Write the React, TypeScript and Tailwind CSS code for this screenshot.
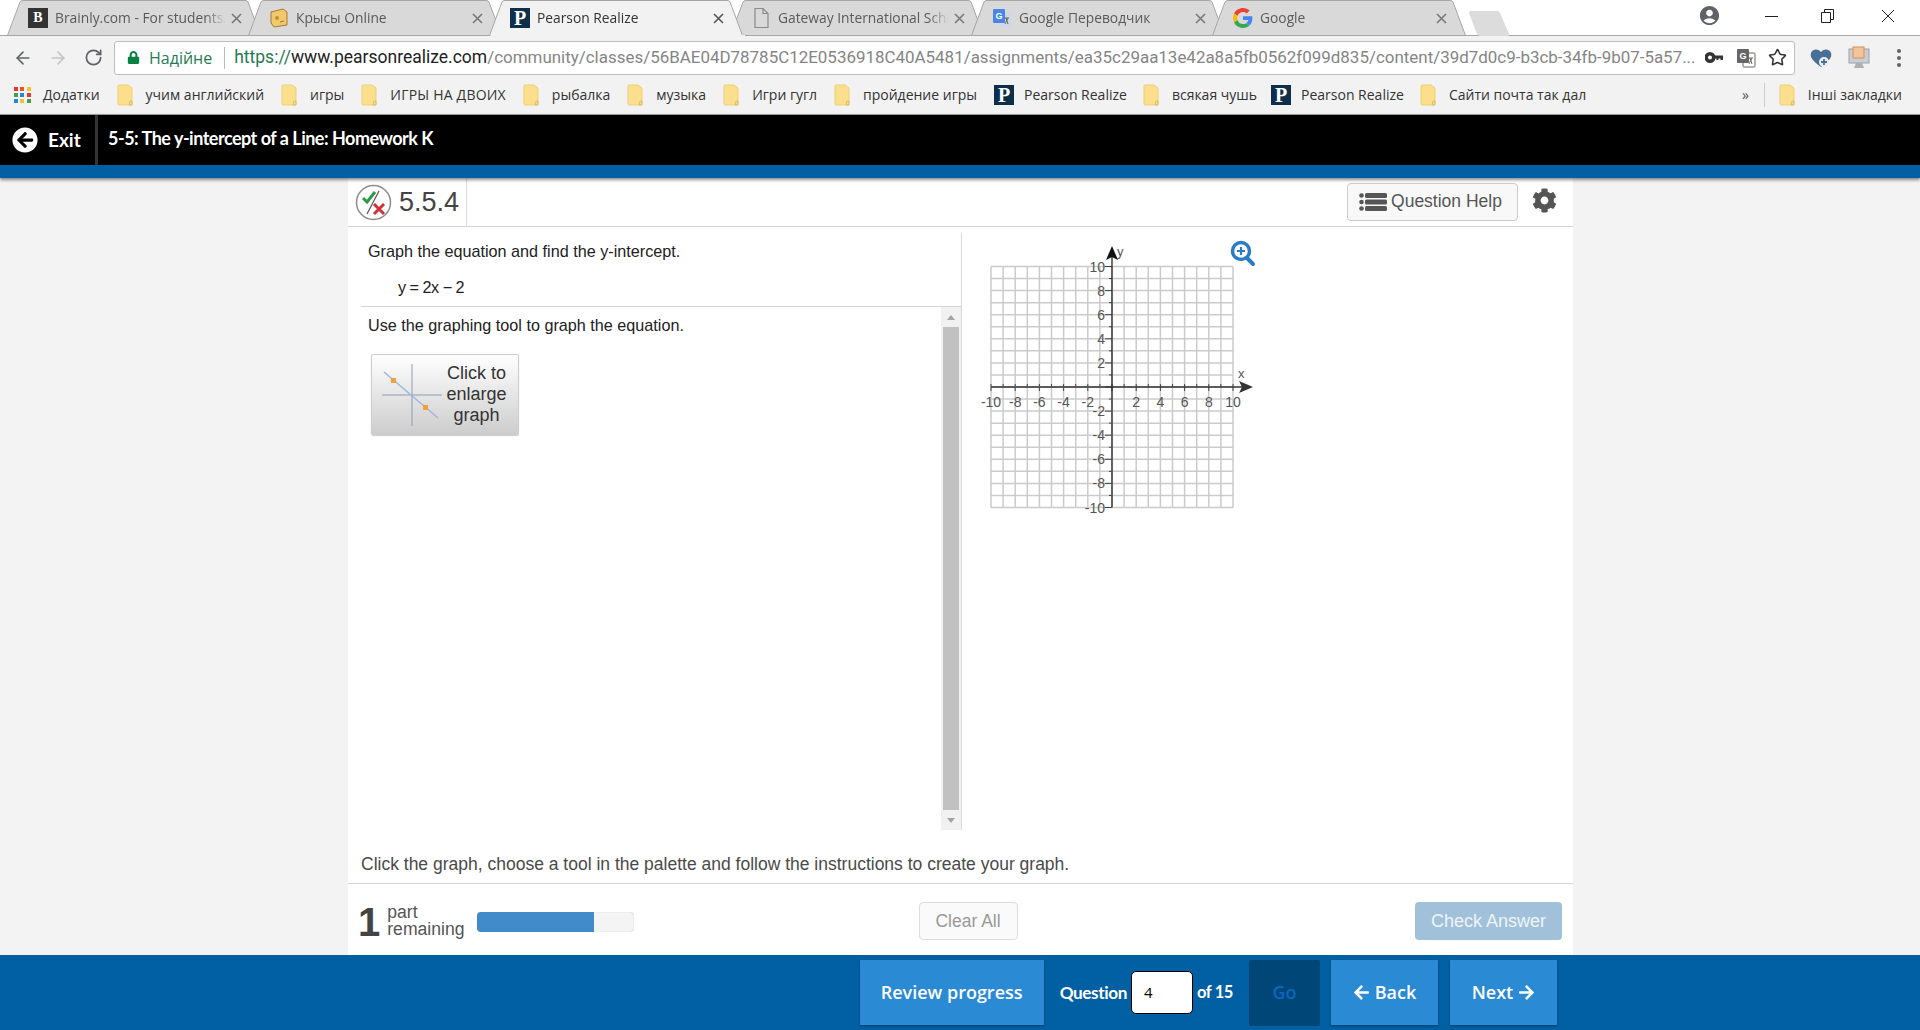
import React from 'react';
import { ArrowLeft, ArrowRight, RotateCw, Star } from 'lucide-react';
import { FaArrowCircleLeft, FaArrowLeft, FaArrowRight, FaCog, FaLock } from 'react-icons/fa';
import { MdAccountCircle } from 'react-icons/md';

const PearsonIcon = () => (
  <div className="w-5 h-5 bg-[#0e2f4c] text-white flex items-center justify-center font-['Liberation_Serif',serif] font-bold text-[20px] leading-none shrink-0">
    P
  </div>
);

const BrainlyIcon = () => (
  <div className="w-5 h-5 bg-[#333] text-white flex items-center justify-center font-['Liberation_Serif',serif] font-bold text-[14px] leading-none shrink-0">
    B
  </div>
);

const CheeseIcon = () => (
  <svg width="20" height="20" viewBox="0 0 20 20" className="shrink-0">
    <path d="M2 4 L14 1 L18 4 L18 17 L5 19 L2 15 Z" fill="#f0c96a" stroke="#a8782c" />
    <circle cx="8" cy="10" r="2" fill="#c68f35" />
    <path d="M11 14 L15 13" stroke="#a8782c" />
  </svg>
);

const DocIcon = () => (
  <svg width="20" height="22" viewBox="0 0 20 22" className="shrink-0">
    <path d="M4 1.500 H12 L17 6.500 V20.500 H4 Z M12 1.500 V6.500 H17" fill="none" stroke="#8a8a8a" strokeWidth="1.200" />
  </svg>
);

const TranslateIcon = ({ grey }: { grey?: boolean }) => (
  <svg width="20" height="20" viewBox="0 0 20 20" className="shrink-0">
    <rect x="7" y="5" width="12" height="14" rx="1" fill={grey ? '#fff' : '#cfd8e6'} stroke={grey ? '#666' : 'none'} />
    <rect x="1" y="1" width="12" height="14" rx="1" fill={grey ? '#666' : '#4a86e8'} />
    <text x="7" y="11" fontSize="9" fontWeight="700" fill="#fff" textAnchor="middle" fontFamily="Liberation Sans">G</text>
    <path d="M12 10 H17 M14 10 L16 16 M16 10 L13 16" stroke="#666" strokeWidth="1" fill="none" />
  </svg>
);

const GoogleIcon = () => (
  <svg width="20" height="20" viewBox="0 0 48 48" className="shrink-0">
    <path fill="#EA4335" d="M24 9.500c3.500 0 6.700 1.300 9.100 3.500l6.800-6.800C35.800 2.400 30.300 0 24 0 14.600 0 6.500 5.400 2.600 13.200l7.900 6.100C12.400 13.700 17.700 9.500 24 9.500z" />
    <path fill="#4285F4" d="M46.500 24.500c0-1.600-.1-3.100-.4-4.500H24v9h12.700c-.6 3-2.200 5.400-4.700 7.100l7.600 5.900c4.400-4.100 6.900-10.100 6.900-17.500z" />
    <path fill="#FBBC05" d="M10.500 28.700c-.5-1.500-.8-3-.8-4.700s.3-3.200.8-4.700l-7.900-6.100C.9 16.500 0 20.100 0 24s.9 7.500 2.600 10.800l7.900-6.100z" />
    <path fill="#34A853" d="M24 48c6.500 0 11.900-2.100 15.600-5.800L32 36.300c-2.100 1.400-4.800 2.200-8 2.200-6.300 0-11.600-4.200-13.500-9.800l-7.900 6.100C6.500 42.600 14.600 48 24 48z" />
  </svg>
);

const FolderIcon = () => (
  <svg width="16" height="22" viewBox="0 0 16 22" className="shrink-0">
    <path d="M2 1 H11 L15 4 V20 Q15 21 14 21 H2 Q1 21 1 20 V2 Q1 1 2 1 Z" fill="#fbdf8c" stroke="#efcf74" />
    <path d="M13 17 H15 V21 H12 Z" fill="none" stroke="#d8b660" strokeWidth="0.800" />
  </svg>
);

const AppsIcon = () => {
  const colors = ['#e53935', '#f4511e', '#fbc02d', '#43a047', '#1e88e5', '#e53935', '#1e88e5', '#fbc02d', '#43a047'];
  return (
    <div className="grid grid-cols-3 gap-[2px] w-[17px] shrink-0">
      {colors.map((c, i) => (
        <div key={i} className="w-[4px] h-[4px]" style={{ backgroundColor: c }} />
      ))}
    </div>
  );
};

const tabs = [
  { title: 'Brainly.com - For students. By students', icon: <BrainlyIcon /> },
  { title: 'Крысы Online', icon: <CheeseIcon /> },
  { title: 'Pearson Realize', icon: <PearsonIcon />, active: true },
  { title: 'Gateway International School', icon: <DocIcon /> },
  { title: 'Google Переводчик', icon: <TranslateIcon /> },
  { title: 'Google', icon: <GoogleIcon /> },
];

const Tab = ({ title, icon, active }: { title: string; icon: React.ReactNode; active?: boolean }) => {
  const w = 254;
  return (
    <div className={`relative w-[254px] h-[36px] -ml-[13px] first:ml-0 shrink-0 flex items-center pl-[21px] ${active ? 'z-10' : ''}`}>
      <svg width={w} height="36" className="absolute left-0 top-0">
        <path
          d={`M0.500 35.500 L13 2 Q13.500 .5 16 .5 H${w - 16} Q${w - 13.500} .5 ${w - 13} 2 L${w - 0.500} 35.500 ${active ? '' : 'Z'}`}
          fill={active ? '#f2f2f2' : '#d9d9d9'}
          stroke="#a6a6a6"
        />
      </svg>
      <div className="relative flex items-center gap-[7px] w-[198px]">
        <div className="w-5 flex justify-center shrink-0">{icon}</div>
        <div className={`whitespace-nowrap overflow-hidden flex-1 text-[13.800px] [mask-image:linear-gradient(to_right,black_88%,transparent)] ${active ? 'text-[#333]' : 'text-[#5a5a5a]'}`}>
          {title}
        </div>
      </div>
      <svg width="11" height="11" viewBox="0 0 11 11" className="relative ml-[5px]">
        <path d="M1 1 L10 10 M10 1 L1 10" stroke={active ? '#555' : '#777'} strokeWidth="1.600" />
      </svg>
    </div>
  );
};

const bookmarks = [
  { label: 'учим английский', gapClass: 'gap-[13px] mr-[17px]' },
  { label: 'игры', gapClass: 'gap-[13px] mr-[17px]' },
  { label: 'ИГРЫ НА ДВОИХ', gapClass: 'gap-[13px] mr-[17px] tracking-[0.200px]' },
  { label: 'рыбалка', gapClass: 'gap-[13px] mr-[17px]' },
  { label: 'музыка', gapClass: 'gap-[13px] mr-[17px]' },
  { label: 'Игри гугл', gapClass: 'gap-[13px] mr-[17px]' },
  { label: 'пройдение игры', gapClass: 'gap-[13px] mr-[17px]' },
  { label: 'Pearson Realize', pearson: true, gapClass: 'gap-[10px] mr-[16px]' },
  { label: 'всякая чушь', gapClass: 'gap-[13px] mr-[14px]' },
  { label: 'Pearson Realize', pearson: true, gapClass: 'gap-[10px] mr-[16px]' },
  { label: 'Сайти почта так дал', gapClass: 'gap-[13px] mr-[17px]' },
];

const BrowserChrome = () => (
  <div className="font-['Open_Sans',sans-serif]">
    {/* tab strip */}
    <div className="relative h-[36px] flex pl-[7px]">
      {tabs.map(t => (
        <Tab key={t.title} {...t} />
      ))}
      <div className="absolute left-0 right-0 bottom-0 h-px bg-[#a6a6a6]" />
      <div className="absolute left-[491px] w-[254px] bottom-0 h-px bg-[#f2f2f2] z-20" />
      <svg width="42" height="27" className="relative mt-[10px] ml-[2px]">
        <path d="M3 1 H29 Q31 1 32 3 L41 24 Q41.500 26 39 26 H12 Q10 26 9 24 L1 3 Q1 1 3 1 Z" fill="#dcdcdc" />
      </svg>
      <div className="ml-auto flex items-start pt-[7px] text-[#5f6368]">
        <MdAccountCircle size={23} className="mr-[44px] -mt-[3px]" />
        <svg width="14" height="14" className="mr-[42px] mt-[2px]">
          <path d="M0 7.500 H13" stroke="#222" />
        </svg>
        <svg width="14" height="14" className="mr-[46px] mt-[2px]">
          <path d="M3.500 3.500 V.5 H12.500 V10.500 H9.500 M.5 3.500 H9.500 V13.500 H.5 Z" fill="none" stroke="#222" />
        </svg>
        <svg width="14" height="14" className="mr-[25px] mt-[2px]">
          <path d="M1 1 L13 13 M13 1 L1 13" stroke="#222" />
        </svg>
      </div>
    </div>

    {/* toolbar */}
    <div className="h-[43px] bg-[#f2f2f2] flex items-center relative">
      <ArrowLeft size={20} className="ml-[13px] text-[#5f6368]" strokeWidth={2} />
      <ArrowRight size={20} className="ml-[15px] text-[#c4c4c4]" strokeWidth={2} />
      <RotateCw size={19} className="ml-[16px] text-[#5f6368]" strokeWidth={2.200} />
      <div className="ml-[11px] w-[1681px] h-[34px] bg-white border border-[#bdbdbd] rounded-[3px] flex items-center text-[17.500px] whitespace-nowrap overflow-hidden">
        <FaLock size={13} className="ml-[12px] text-[#0b8043] shrink-0" />
        <span className="ml-[9px] text-[#257a52] text-[16px]">Надійне</span>
        <div className="w-px h-[22px] bg-[#bbb] ml-[12px]" />
        <div className="ml-[9px] w-[1460px] overflow-hidden font-['Roboto',sans-serif]">
          <span className="text-[#257a52]">https://</span>
          <span className="text-[#222]">www.pearsonrealize.com</span>
          <span className="text-[#858585] text-[16.950px]">/community/classes/56BAE04D78785C12E0536918C40A5481/assignments/ea35c29aa13e42a8a5fb0562f099d835/content/39d7d0c9-b3cb-34fb-9b07-5a57...</span>
        </div>
        <svg width="18" height="11" viewBox="0 0 18 11" className="ml-[11px] shrink-0">
          <path fillRule="evenodd" d="M5 0 A5.500 5.500 0 1 1 5 11 A5.500 5.500 0 1 1 5 0 Z M5 3.500 A2 2 0 1 0 5 7.500 A2 2 0 1 0 5 3.500 Z" fill="#333" />
          <path d="M9 3.500 H18 V8 H15.500 V6.500 H13.500 V8 H11.500 V6.500 H9 Z" fill="#333" />
        </svg>
        <div className="ml-[13px] shrink-0">
          <TranslateIcon grey />
        </div>
        <Star size={19} className="ml-[12px] text-[#333] shrink-0" strokeWidth={2} />
      </div>
      <svg width="24" height="22" viewBox="0 0 24 22" className="ml-[14px]">
        <path d="M12 20 C2 13 1 9 2 6 C3 2 9 1 12 5 C15 1 21 2 22 6 C23 9 22 13 12 20 Z" fill="#4a6f96" />
        <circle cx="15" cy="15" r="5" fill="#e9eef4" />
        <path d="M15 12 V18 M12 15 H18" stroke="#4a6f96" strokeWidth="1.800" />
      </svg>
      <svg width="24" height="24" viewBox="0 0 24 24" className="ml-[14px]">
        <rect x="2" y="3" width="20" height="14" fill="#c8ced4" stroke="#9aa2a8" />
        <rect x="6" y="1" width="11" height="11" fill="#f3c39a" stroke="#d88e54" />
        <path d="M9 17 L7 22 H17 L15 17" fill="#aab2b8" />
      </svg>
      <svg width="6" height="20" className="ml-[25px]">
        <circle cx="3" cy="3" r="2" fill="#5f6368" />
        <circle cx="3" cy="10" r="2" fill="#5f6368" />
        <circle cx="3" cy="17" r="2" fill="#5f6368" />
      </svg>
    </div>

    {/* bookmarks */}
    <div className="h-[35px] bg-[#f2f2f2] flex items-center pb-[4px] text-[14px] text-[#333] whitespace-nowrap pl-[14px]">
      <AppsIcon />
      <span className="ml-[12px] mr-[17px]">Додатки</span>
      {bookmarks.map((b, i) => (
        <div key={i} className={`flex items-center ${b.gapClass}`}>
          {b.pearson ? <PearsonIcon /> : <FolderIcon />}
          <span>{b.label}</span>
        </div>
      ))}
      <span className="ml-auto text-[#555]">»</span>
      <div className="w-px h-6 bg-[#ccc] ml-[15px] mr-[14px]" />
      <div className="flex items-center gap-[13px] mr-[18px]">
        <FolderIcon />
        <span>Інші закладки</span>
      </div>
    </div>
  </div>
);

const AppHeader = () => (
  <div className="relative z-10 shadow-[0_2px_3px_rgba(0,0,0,0.45)]">
    <div className="h-[51px] bg-black text-white flex items-center border-t border-[#999]">
      <div className="w-[98px] h-full flex items-center border-r-[3px] border-[#333] pl-[12px]">
        <FaArrowCircleLeft size={26} />
        <span className="ml-[10px] font-['Lato',sans-serif] font-bold text-[19px]">Exit</span>
      </div>
      <div className="ml-[10px] -mt-[4px] font-['Lato',sans-serif] font-bold text-[18px] tracking-[-0.500px]">
        5-5: The y-intercept of a Line: Homework K
      </div>
    </div>
    <div className="h-[13px] bg-[#0060a3]" />
  </div>
);

const Graph = () => {
  const sx = (v: number) => 142 + v * 12.1;
  const sy = (v: number) => 147 - v * 12.05;
  const units = Array.from({ length: 21 }, (_, i) => i - 10);
  const labels = [-10, -8, -6, -4, -2, 2, 4, 6, 8, 10];
  return (
    <svg width="300" height="280" className="ml-[8px] mt-[13px] font-['Liberation_Sans',sans-serif]">
      {units.map(u => (
        <g key={u}>
          <line x1={sx(u)} x2={sx(u)} y1={sy(10)} y2={sy(-10)} stroke="#cbcbcb" strokeWidth="1.500" />
          <line x1={sx(-10)} x2={sx(10)} y1={sy(u)} y2={sy(u)} stroke="#cbcbcb" strokeWidth="1.500" />
          <line x1={sx(u)} x2={sx(u)} y1={sy(0) - 3} y2={sy(0) + (u % 2 === 0 ? 4 : 0)} stroke="#444" />
          <line x1={sx(0) - (u % 2 === 0 ? 7 : 3)} x2={sx(0)} y1={sy(u)} y2={sy(u)} stroke="#444" />
        </g>
      ))}
      <line x1={sx(-10)} x2={sx(11.300)} y1={sy(0)} y2={sy(0)} stroke="#333" strokeWidth="1.300" />
      <line x1={sx(0)} x2={sx(0)} y1={sy(11.300)} y2={sy(-10)} stroke="#222" strokeWidth="1.300" />
      <path d="M142 6 L148 20 L142 17 L136 20 Z" fill="#111" />
      <path d="M283 147 L269 141 L272 147 L269 153 Z" fill="#333" />
      <text x="147" y="16" fontSize="13" fill="#555">y</text>
      <text x="268" y="138" fontSize="13" fill="#555">x</text>
      {labels.map(l => (
        <g key={l} fontSize="14" fill="#555">
          <text x={sx(l)} y={167} textAnchor="middle">{l}</text>
          <text x={sx(0) - 7} y={sy(l) + 5} textAnchor="end">{l}</text>
        </g>
      ))}
      {/* magnifier */}
      <circle cx="271" cy="11" r="8.500" fill="none" stroke="#2a7cc7" strokeWidth="3.400" />
      <path d="M277 18 L283 24" stroke="#2a7cc7" strokeWidth="4" strokeLinecap="round" />
      <path d="M271 7 V15 M267 11 H275" stroke="#2a7cc7" strokeWidth="2.200" />
    </svg>
  );
};

const EnlargeButton = () => (
  <button className="ml-[10px] mt-[17px] w-[148px] h-[81px] flex items-center bg-gradient-to-b from-white to-[#cdcdcd] border border-[#ccc] rounded-[2px] text-[18px] leading-[21px] text-[#333] shadow-[0_1px_1px_rgba(0,0,0,0.2)]">
    <svg width="64" height="64" viewBox="0 0 64 64" className="ml-[8px] shrink-0">
      <path d="M32 1 V63 M2 32 H62" stroke="#8f9db3" strokeWidth="1" />
      <path d="M4 9 L58 55" stroke="#9db8dc" strokeWidth="1.500" />
      <rect x="11" y="15" width="5" height="5" fill="#f0a13c" />
      <rect x="43" y="42" width="5" height="5" fill="#f0a13c" />
    </svg>
    <span className="flex-1 text-center pr-[9px]">
      Click to
      <br />
      enlarge
      <br />
      graph
    </span>
  </button>
);

const Scrollbar = () => (
  <div className="w-[20px] shrink-0 flex flex-col items-center bg-[#f1f1f1]">
    <div className="h-[20px] flex items-center justify-center">
      <div className="w-0 h-0 border-x-[4px] border-x-transparent border-b-[5px] border-b-[#a3a3a3]" />
    </div>
    <div className="w-[16px] flex-1 bg-[#c1c1c1]" />
    <div className="h-[20px] flex items-center justify-center">
      <div className="w-0 h-0 border-x-[4px] border-x-transparent border-t-[5px] border-t-[#a3a3a3]" />
    </div>
  </div>
);

const QuestionHeader = () => (
  <div className="h-[49px] border-b border-[#d5d5d5] flex items-center">
    <div className="h-[48px] w-[119px] border-r border-[#ddd] flex items-center pl-[7px]">
      <svg width="37" height="37" viewBox="0 0 37 37" className="shrink-0">
        <circle cx="18.500" cy="18.500" r="17" fill="#fff" stroke="#8c8c8c" strokeWidth="1.500" />
        <path d="M8 14 L12 18 L20 8" fill="none" stroke="#2f9a46" strokeWidth="3" />
        <path d="M24 7 L12 30" stroke="#555" strokeWidth="1.200" />
        <path d="M19 20 L29 30 M29 20 L19 30" stroke="#d12f3a" strokeWidth="3" />
      </svg>
      <span className="ml-[7px] text-[27px] text-[#444]">5.5.4</span>
    </div>
    <button className="ml-auto w-[171px] h-[38px] -mt-[1px] pr-[4px] flex items-center justify-center gap-[4px] bg-[#f8f8f8] border border-[#ccc] rounded-[4px] text-[17.500px] text-[#555]">
      <svg width="28" height="18" viewBox="0 0 28 18">
        <circle cx="2.500" cy="2.500" r="2.300" fill="#555" />
        <circle cx="2.500" cy="9" r="2.300" fill="#555" />
        <circle cx="2.500" cy="15.500" r="2.300" fill="#555" />
        <rect x="6" y="0" width="22" height="5" rx="1.500" fill="#555" />
        <rect x="6" y="6.500" width="22" height="5" rx="1.500" fill="#555" />
        <rect x="6" y="13" width="22" height="5" rx="1.500" fill="#555" />
      </svg>
      Question Help
    </button>
    <FaCog size={25} className="ml-[14px] mr-[16px] -mt-[3px] text-[#555]" />
  </div>
);

const QuestionBody = () => (
  <div className="h-[603px] flex">
    <div className="w-[614px] flex flex-col border-r border-[#d8d8d8] mt-[6px]">
      <div className="h-[74px] ml-[13px] border-b border-[#d5d5d5] text-[#222] text-[16.200px]">
        <div className="ml-[7px] mt-[6px]">Graph the equation and find the y-intercept.</div>
        <div className="ml-[37px] mt-[12px] tracking-[-0.500px]">y = 2x − 2</div>
      </div>
      <div className="flex-1 flex ml-[13px]">
        <div className="flex-1">
          <div className="ml-[7px] mt-[6px] text-[16.200px] text-[#222]">Use the graphing tool to graph the equation.</div>
          <EnlargeButton />
        </div>
        <Scrollbar />
      </div>
    </div>
    <Graph />
  </div>
);

const QuestionFooter = () => (
  <>
    <div className="h-[54px] border-b border-[#d5d5d5] flex items-center pt-[16px] pl-[13px] text-[17.500px] text-[#4a4a4a]">
      Click the graph, choose a tool in the palette and follow the instructions to create your graph.
    </div>
    <div className="h-[70px] flex items-start pt-[18px] text-[#555]">
      <span className="ml-[10px] mt-[-4px] text-[40px] leading-[48px] font-bold text-[#444]">1</span>
      <div className="ml-[7px] mt-[2px] text-[17.600px] leading-[17px]">
        part
        <br />
        remaining
      </div>
      <div className="ml-[12px] mt-[10px] w-[157px] h-[20px] bg-[#f4f4f4] rounded-[4px] overflow-hidden shadow-[inset_0_0_1px_rgba(0,0,0,0.3)]">
        <div className="w-[117px] h-full bg-[#428bca]" />
      </div>
      <button className="ml-[285px] w-[99px] h-[38px] bg-[#fafafa] border border-[#ddd] rounded-[4px] text-[17.500px] text-[#999]">
        Clear All
      </button>
      <button className="ml-auto mr-[11px] w-[147px] h-[38px] bg-[#a1c1da] rounded-[4px] text-[18px] text-[#eef4f9]">
        Check Answer
      </button>
    </div>
  </>
);

const BottomBar = () => (
  <div className="h-[75px] bg-[#0060a3] flex items-center justify-end pr-[363px] font-['Open_Sans',sans-serif] font-semibold text-white">
    <button className="w-[184px] h-[65px] bg-[#2a8ad4] shadow-[0_1px_2px_rgba(0,0,0,0.4)] text-[18px]">Review progress</button>
    <span className="ml-[16px] text-[17.200px] tracking-[-0.400px] font-['Lato',sans-serif] font-bold">Question</span>
    <div className="ml-[4px] w-[62px] h-[43px] bg-white border border-black rounded-[5px] flex items-center pl-[12px] text-[15px] font-normal text-black">
      4
    </div>
    <span className="ml-[4px] text-[16.500px] tracking-[-0.400px] font-['Lato',sans-serif] font-bold">of 15</span>
    <button className="ml-[16px] w-[71px] h-[66px] bg-[#004676] rounded-[2px] text-[#0c66c2] text-[18px]">Go</button>
    <button className="ml-[11px] w-[107px] h-[65px] bg-[#2a8ad4] shadow-[0_1px_2px_rgba(0,0,0,0.4)] text-[18px] flex items-center justify-center gap-[5px]">
      <FaArrowLeft size={17} />
      Back
    </button>
    <button className="ml-[12px] w-[107px] h-[65px] bg-[#2a8ad4] shadow-[0_1px_2px_rgba(0,0,0,0.4)] text-[18px] flex items-center justify-center gap-[5px]">
      Next
      <FaArrowRight size={17} />
    </button>
  </div>
);

export default function App() {
  return (
    <div className="w-[1920px] h-[1030px] overflow-hidden bg-white flex flex-col">
      <BrowserChrome />
      <AppHeader />
      <div className="flex-1 bg-[#f3f3f3]">
        <div className="ml-[348px] w-[1225px] h-full bg-white font-['Liberation_Sans',sans-serif]">
          <QuestionHeader />
          <QuestionBody />
          <QuestionFooter />
        </div>
      </div>
      <BottomBar />
    </div>
  );
}
